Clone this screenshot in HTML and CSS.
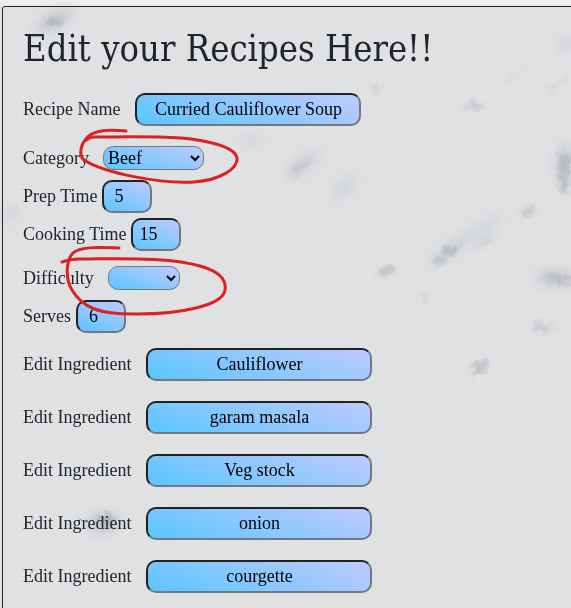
FILE: index.html
```html
<!DOCTYPE html>
<html lang="en">
<head>
<meta charset="utf-8">
<title>Edit Recipe</title>
<link rel="stylesheet" href="styles.css">
</head>
<body>
<svg class="marble" viewBox="0 0 571 608" aria-hidden="true">
  <defs>
    <filter id="soft" x="-100%" y="-100%" width="300%" height="300%"><feGaussianBlur stdDeviation="6"/></filter>
    <filter id="fine" filterUnits="userSpaceOnUse" x="0" y="0" width="571" height="608">
      <feTurbulence type="fractalNoise" baseFrequency=".12" numOctaves="3" seed="4" result="noise"/>
      <feGaussianBlur in="SourceGraphic" stdDeviation="2.6" result="blur"/>
      <feDisplacementMap in="blur" in2="noise" scale="12" xChannelSelector="R" yChannelSelector="G"/>
    </filter>
  </defs>
  <g fill="#a4a7ad" filter="url(#soft)" opacity=".45">
    <ellipse cx="54" cy="20" rx="20" ry="7" transform="rotate(-30 54 20)"/>
    <ellipse cx="102" cy="523" rx="16" ry="9"/>
    <ellipse cx="303" cy="165" rx="20" ry="6" transform="rotate(-40 303 165)" opacity=".7"/>
    <ellipse cx="345" cy="187" rx="16" ry="6" transform="rotate(-40 345 187)" opacity=".5"/>
    <ellipse cx="565" cy="165" rx="7" ry="22" opacity=".9"/>
    <ellipse cx="556" cy="278" rx="20" ry="7" opacity=".8"/>
    <ellipse cx="465" cy="240" rx="45" ry="6" transform="rotate(-32 465 240)" opacity=".5"/>
    <ellipse cx="566" cy="44" rx="10" ry="5" transform="rotate(-40 566 44)" opacity=".5"/>
    <ellipse cx="250" cy="141" rx="13" ry="5" transform="rotate(-15 250 141)" opacity=".4"/>
    <ellipse cx="10" cy="215" rx="12" ry="6" opacity=".4"/>
  </g>
  <g fill="#93969a" filter="url(#fine)" opacity=".45">
    <ellipse cx="54" cy="23" rx="8" ry="4"/>
    <ellipse cx="107" cy="520" rx="9" ry="6"/>
    <ellipse cx="451" cy="249" rx="9" ry="4" transform="rotate(-20 451 249)"/>
    <ellipse cx="441" cy="260" rx="7" ry="3" transform="rotate(-25 441 260)"/>
    <ellipse cx="386" cy="271" rx="10" ry="5" transform="rotate(-30 386 271)" opacity=".8"/>
    <ellipse cx="479" cy="368" rx="9" ry="5" transform="rotate(-55 479 368)"/>
    <ellipse cx="528" cy="212" rx="9" ry="4" transform="rotate(-35 528 212)" opacity=".8"/>
    <ellipse cx="564" cy="167" rx="6" ry="16" opacity=".7"/>
    <ellipse cx="564" cy="187" rx="6" ry="4"/>
    <ellipse cx="487" cy="241" rx="10" ry="3" transform="rotate(-30 487 241)" opacity=".5"/>
    <ellipse cx="558" cy="279" rx="16" ry="5" opacity=".7"/>
    <ellipse cx="543" cy="327" rx="12" ry="4" opacity=".6"/>
    <ellipse cx="376" cy="88" rx="6" ry="3" opacity=".5"/>
    <ellipse cx="425" cy="298" rx="4" ry="4" opacity=".4"/>
    <ellipse cx="300" cy="167" rx="12" ry="4" transform="rotate(-38 300 167)" opacity=".4"/>
    <path d="M462 111l12-11 12 10-12-3z"/>
    <path d="M502 82l28-17-26 20zM548 91l23-20v6l-20 18z" opacity=".25"/>
  </g>
</svg>
<main class="panel">
  <h1 class="title">Edit your Recipes Here!!</h1>
  <form class="form">
    <div class="row row-text row-name"><label for="name">Recipe Name</label><input id="name" class="text" value="Curried Cauliflower Soup"></div>
    <div class="row row-select"><label for="cat">Category</label><select id="cat" class="category"><option>Beef</option></select></div>
    <div class="row row-number"><label for="prep">Prep Time</label><input id="prep" class="number" value="5"></div>
    <div class="row row-number"><label for="cook">Cooking Time</label><input id="cook" class="number wide-value" value="15"></div>
    <div class="row row-select row-difficulty"><label for="diff">Difficulty</label><select id="diff" class="difficulty"><option></option></select></div>
    <div class="row row-number row-serves"><label for="serves">Serves</label><input id="serves" class="number" value="6"></div>
    <div class="ingredients">
      <div class="row row-text"><label for="i1">Edit Ingredient</label><input id="i1" class="text" value="Cauliflower"></div>
      <div class="row row-text"><label for="i2">Edit Ingredient</label><input id="i2" class="text" value="garam masala"></div>
      <div class="row row-text"><label for="i3">Edit Ingredient</label><input id="i3" class="text" value="Veg stock"></div>
      <div class="row row-text"><label for="i4">Edit Ingredient</label><input id="i4" class="text" value="onion"></div>
      <div class="row row-text"><label for="i5">Edit Ingredient</label><input id="i5" class="text" value="courgette"></div>
    </div>
  </form>
</main>
<svg class="marks" viewBox="0 0 571 608" aria-hidden="true">
  <path d="M126 131C108 129 97 130 90 135C79 144 79 156 84 160C104 173 160 184 194 182C220 180 238 169 237 158C235 146 204 140 181 138C151 136 119 137 95 137Q89 137 87 140"/>
  <path d="M119 248C94 247 80 247 73 253C66 260 65 279 72 290C82 307 98 315 139 314C178 314 223 306 225 290C228 273 206 266 181 262C148 257 108 259 80 259Q70 259 62 262"/>
</svg>
</body>
</html>
```

FILE: styles.css
```css
* { box-sizing: border-box; }
body {
  margin: 0;
  height: 608px;
  padding: 6px 0 0 2px;
  overflow: hidden;
  position: relative;
  background: linear-gradient(#f1f1f1, #e8e8e8 6px, #dfe1e3 7px);
  font: 18px/33px "Liberation Serif", serif;
  color: #212529;
}
.marble, .marks {
  position: absolute;
  left: 0;
  top: 0;
  width: 571px;
  height: 608px;
  pointer-events: none;
}
.marks path {
  fill: none;
  stroke: #dc2023;
  stroke-width: 3;
  stroke-linecap: round;
  stroke-linejoin: round;
}
.panel {
  position: relative;
  width: 580px;
  height: 620px;
  padding: 18px 20px;
  border: 1px solid #212529;
  border-radius: 3px;
}
.title {
  width: max-content;
  margin: 0 0 20px;
  font: 400 37px/48px "DejaVu Serif Condensed", "DejaVu Serif", serif;
  font-stretch: condensed;
  transform: scaleX(.975);
  transform-origin: left;
}
.row { display: flex; align-items: center; }
.row-text { height: 33px; gap: 15px; }
.row-name { margin-bottom: 16px; }
.row-select { height: 33px; gap: 14px; }
.row-number { height: 33px; gap: 4px; margin-top: 5px; }
.row-difficulty { margin-top: 11px; }
.row-serves { gap: 5px; }
.ingredients {
  display: grid;
  gap: 20px;
  margin-top: 15px;
}
label { white-space: nowrap; }
input, select {
  margin: 0;
  font: 18px "Liberation Serif", serif;
  color: #000;
  background: linear-gradient(20deg, #5bc5ff, #bfcbff);
}
input {
  height: 33px;
  border: 2px solid;
  border-color: #1f2225 #74787c #74787c #1f2225;
  border-radius: 10px;
  padding: 0;
}
.text { width: 226px; text-align: center; }
.number { width: 50px; padding-left: 11px; }
.wide-value { padding-left: 7px; }
select {
  height: 24px;
  margin-bottom: 2px;
  border: 1px solid #74787c;
  border-radius: 10px;
}
.category { width: 101px; }
.difficulty { width: 72px; }
```
